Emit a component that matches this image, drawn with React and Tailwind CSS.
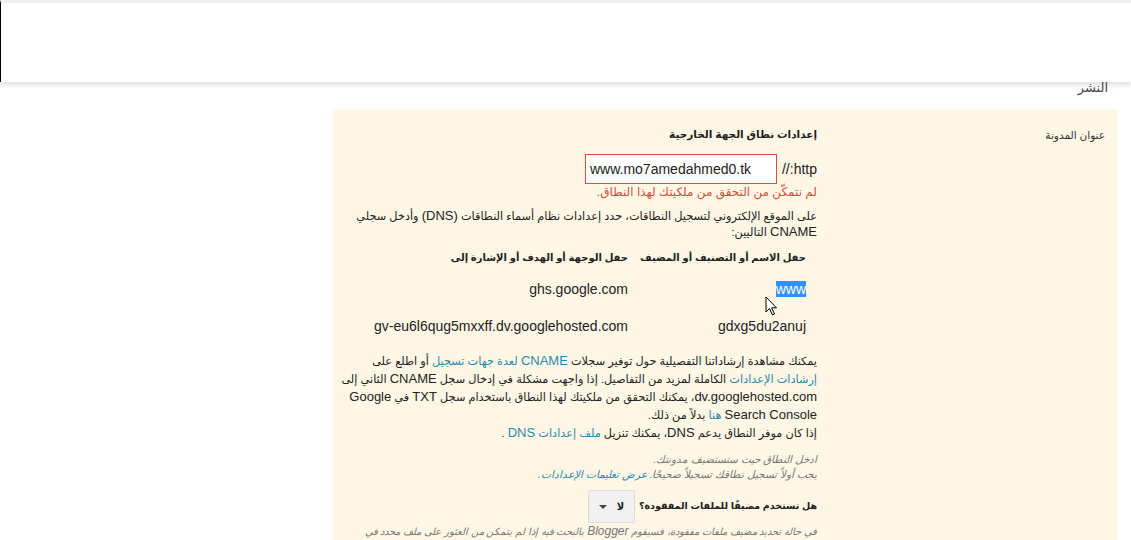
import React from 'react';

const font = { fontFamily: '"Liberation Sans", "DejaVu Sans", Arial, sans-serif' };

function Cursor() {
  return (
    <svg className="absolute left-[765px] top-[296px]" width="14" height="21" viewBox="0 0 14 21">
      <path d="M1 1 L1 16 L4.5 12.5 L7.5 19 L9.5 18 L6.6 11.8 L11.5 11.8 Z" fill="#fff" stroke="#000" strokeWidth="1" strokeLinejoin="round" />
    </svg>
  );
}

const link = 'text-[#2a8ab0]';

export default function App() {
  return (
    <div className="relative h-[540px] bg-white overflow-hidden text-[#222]" style={font}>
      {/* top bar */}
      <div className="h-[82px] bg-white border-t-[3px] border-[#efefef] border-l border-l-black shadow-[0_3px_5px_rgba(0,0,0,0.12)]" />

      <div dir="rtl" className="pr-[23px]">
        <div className="text-[13px] text-[#444] h-[27px] leading-[12px]">النشر</div>
      </div>

      <div dir="rtl" className="pr-[13px]">
        <div className="w-[785px] bg-[#fff7e6] flex pt-[17px] pb-6">
          {/* label column */}
          <div className="w-[301px] pr-[13px] pt-[2px] text-[10.5px] text-[#333]">عنوان المدونة</div>

          {/* content column */}
          <div className="w-[462px] text-[11.3px]">
            <div className="font-bold text-[10.5px] leading-[16px]">إعدادات نطاق الجهة الخارجية</div>

            <div className="flex items-center gap-[5px] mt-[12px]">
              <span className="text-[14px]">http://</span>
              <div dir="ltr" className="w-[192px] h-[30px] border border-[#dd4b39] bg-white px-[4px] flex items-center text-[14px]">
                www.mo7amedahmed0.tk
              </div>
            </div>

            <div className="text-[12px] leading-[14px] text-[#dd4b39] mt-[1px]">لم نتمكّن من التحقق من ملكيتك لهذا النطاق.</div>

            <div className="leading-[16px] mt-[9px] whitespace-nowrap">
              على الموقع الإلكتروني لتسجيل النطاقات، حدد إعدادات نظام أسماء النطاقات <span className="text-[13px]">(DNS)</span> وأدخل سجلي
              <br />
              <span className="text-[13px]">CNAME</span> التاليين:
            </div>

            <div className="mt-[11px] pr-[11px] text-[14px] whitespace-nowrap">
              <div className="flex font-bold text-[10px] leading-[14px]">
                <div className="w-[178px]">حقل الاسم أو التصنيف أو المضيف</div>
                <div>حقل الوجهة أو الهدف أو الإشارة إلى</div>
              </div>
              <div className="flex mt-[15px] leading-[18px]">
                <div className="w-[178px]"><span className="bg-[#3390ff] text-white">www</span></div>
                <div>ghs.google.com</div>
              </div>
              <div className="flex mt-[19px] leading-[18px]">
                <div className="w-[178px]">gdxg5du2anuj</div>
                <div>gv-eu6l6qug5mxxff.dv.googlehosted.com</div>
              </div>
            </div>

            <div className="leading-[17px] mt-[17px] whitespace-nowrap">
              يمكنك مشاهدة إرشاداتنا التفصيلية حول توفير سجلات <span className={link}><span className="text-[13px]">CNAME</span> لعدة جهات تسجيل</span> أو اطلع على
              <br />
              <span className={link}>إرشادات الإعدادات</span> الكاملة لمزيد من التفاصيل. إذا واجهت مشكلة في إدخال سجل <span className="text-[13px]">CNAME</span> الثاني إلى
              <br />
              <span className="text-[13px]">dv.googlehosted.com</span>، يمكنك التحقق من ملكيتك لهذا النطاق باستخدام سجل <span className="text-[13px]">TXT</span> في <span className="text-[13px]">Google</span>
              <br />
              <span className="text-[13px]">Search Console</span> <span className={link}>هنا</span> بدلاً من ذلك.
              <br />
              إذا كان موفر النطاق يدعم <span className="text-[13px]">DNS</span>، يمكنك تنزيل <span className={link}>ملف إعدادات <span className="text-[13px]">DNS</span></span> .
            </div>

            <div className="mt-[10px] text-[10.5px] leading-[15px] italic text-[#777]">
              ادخل النطاق حيث ستستضيف مدونتك.
              <br />
              يجب أولاً تسجيل نطاقك تسجيلاً صحيحًا. <span className={link}>عرض تعليمات الإعدادات</span>.
            </div>

            <div className="flex items-center gap-[4px] mt-[8px]">
              <span className="font-bold text-[9.5px]">هل تستخدم مضيفًا للملفات المفقودة؟</span>
              <div className="w-[47px] h-[33px] bg-[#f1f1f1] border border-[#dcdcdc] rounded-[2px] flex items-center justify-center gap-[10px]">
                <span className="font-bold text-[10px]">لا</span>
                <span className="w-0 h-0 border-l-[4px] border-r-[4px] border-t-[4px] border-l-transparent border-r-transparent border-t-[#444]" />
              </div>
            </div>

            <div className="mt-[1px] text-[10px] leading-[15px] italic text-[#777] whitespace-nowrap">
              في حالة تحديد مضيف ملفات مفقودة، فسيقوم <span className="text-[12px]">Blogger</span> بالبحث فيه إذا لم يتمكن من العثور على ملف محدد في
              <br />
              النطاق الخاص بمدونتك.
            </div>
          </div>
        </div>
      </div>

      <Cursor />
    </div>
  );
}
